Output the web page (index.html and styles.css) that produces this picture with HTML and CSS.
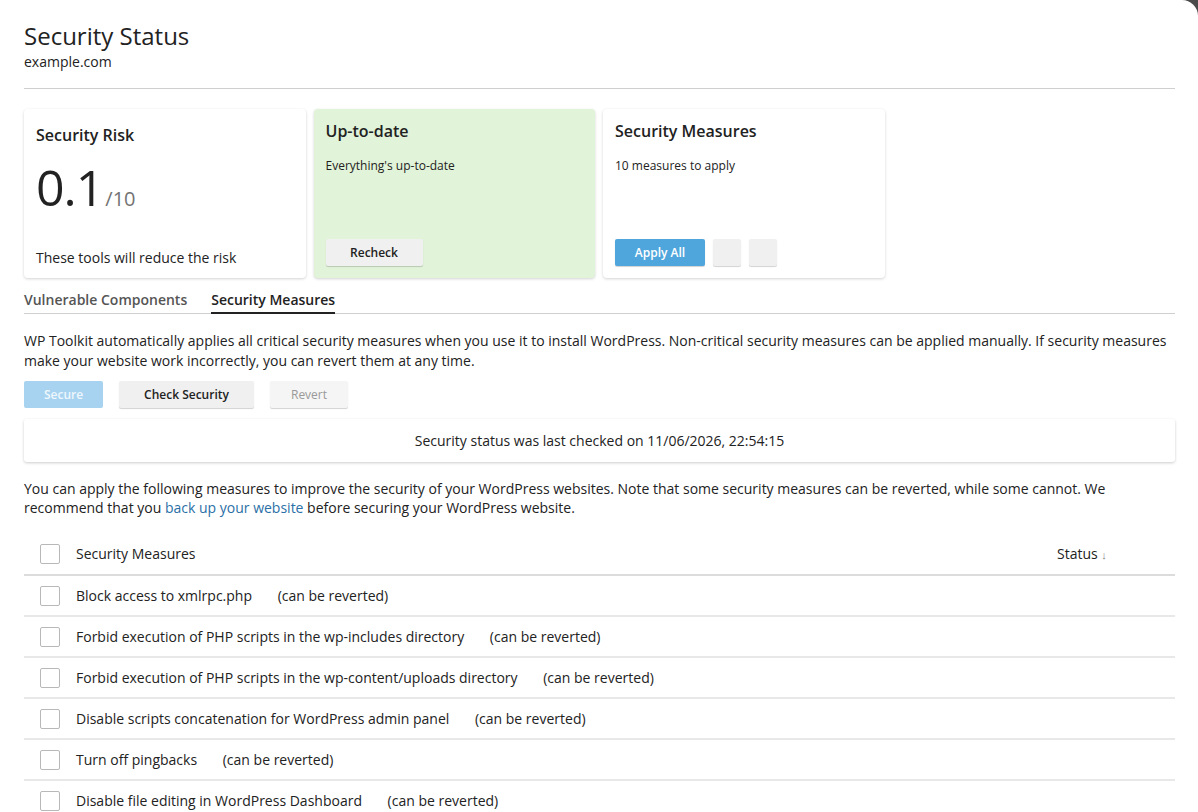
FILE: index.html
```html
<!DOCTYPE html>
<html lang="en">
<head>
    <meta charset="UTF-8">
    <meta name="viewport" content="width=device-width, initial-scale=1.0">
    <title>Security Status</title>
    <link rel="stylesheet" href="styles.css">
</head>
<body>
    <div class="panel">
        <h1 class="title">Security Status</h1>
        <div class="subtitle">example.com</div>
        <hr class="divider">

        <div class="cards">
            <div class="card card-risk">
                <div class="card-title">Security Risk</div>
                <div class="score"><span class="score-value">0.1</span><span class="score-max">/10</span></div>
                <div class="card-foot">These tools will reduce the risk</div>
            </div>
            <div class="card card-ok">
                <div class="card-title">Up-to-date</div>
                <div class="card-text">Everything's up-to-date</div>
                <div class="card-actions">
                    <button class="btn btn-wide">Recheck</button>
                </div>
            </div>
            <div class="card">
                <div class="card-title">Security Measures</div>
                <div class="card-text">10 measures to apply</div>
                <div class="card-actions">
                    <button class="btn btn-primary">Apply All</button>
                    <button class="btn btn-icon"></button>
                    <button class="btn btn-icon"></button>
                </div>
            </div>
        </div>

        <div class="tabs">
            <div class="tab">Vulnerable Components</div>
            <div class="tab active">Security Measures</div>
        </div>

        <p class="intro">WP Toolkit automatically applies all critical security measures when you use it to install WordPress. Non-critical security measures can be applied manually. If security measures make your website work incorrectly, you can revert them at any time.</p>

        <div class="toolbar">
            <button class="btn btn-secure">Secure</button>
            <button class="btn btn-check">Check Security</button>
            <button class="btn btn-disabled">Revert</button>
        </div>

        <div class="last-check">Security status was last checked on 11/06/2026, 22:54:15</div>

        <p class="note">You can apply the following measures to improve the security of your WordPress websites. Note that some security measures can be reverted, while some cannot. We recommend that you <a href="#" class="link">back up your website</a> before securing your WordPress website.</p>

        <table class="measures">
            <thead>
                <tr>
                    <th class="col-check"><span class="checkbox"></span></th>
                    <th>Security Measures</th>
                    <th class="col-status">Status <span class="sort">&darr;</span></th>
                </tr>
            </thead>
            <tbody id="rows"></tbody>
        </table>
    </div>

    <script>
        const measures = [
            "Block access to xmlrpc.php",
            "Forbid execution of PHP scripts in the wp-includes directory",
            "Forbid execution of PHP scripts in the wp-content/uploads directory",
            "Disable scripts concatenation for WordPress admin panel",
            "Turn off pingbacks",
            "Disable file editing in WordPress Dashboard",
            "Forbid execution of PHP scripts in the wp-content directory"
        ];

        const rows = document.getElementById('rows');
        measures.forEach(name => {
            const tr = document.createElement('tr');
            tr.innerHTML = '<td class="col-check"><span class="checkbox"></span></td>' +
                '<td>' + name + ' <span class="revert-note">(can be reverted)</span></td>' +
                '<td class="col-status"></td>';
            rows.appendChild(tr);
        });
    </script>
</body>
</html>
```

FILE: styles.css
```css
html, body {
    margin: 0;
    padding: 0;
    height: 100%;
    overflow: hidden;
    background-color: #4a4a4a;
    font-family: "Open Sans", Arial, sans-serif;
    color: #222;
}
.panel {
    background-color: #fff;
    min-height: 100%;
    border-top-right-radius: 16px;
    padding: 20px 23px 0 24px;
    box-sizing: border-box;
}
.title {
    margin: 0;
    font-size: 24px;
    line-height: 32px;
    font-weight: 400;
}
.subtitle {
    font-size: 14px;
    line-height: 20px;
}
.divider {
    margin: 16px 0 20px;
    border: 0;
    border-top: 1px solid #cfcfcf;
}
.cards {
    display: flex;
    gap: 8px;
}
.card {
    width: 281.5px;
    height: 169px;
    box-sizing: border-box;
    padding: 12px;
    border-radius: 4px;
    background-color: #fff;
    box-shadow: 0 1px 3px rgba(0, 0, 0, 0.18);
    display: flex;
    flex-direction: column;
}
.card-risk {
    padding-top: 16px;
}
.card-ok {
    background-color: #e1f3d8;
}
.card-title {
    font-size: 16px;
    line-height: 20px;
    font-weight: 600;
}
.card-text {
    margin-top: 17px;
    font-size: 12px;
    line-height: 16px;
}
.score {
    margin-top: 14px;
    display: flex;
    align-items: baseline;
}
.score-value {
    font-size: 50px;
    line-height: 56px;
    letter-spacing: -1px;
}
.score-max {
    margin-left: 2px;
    font-size: 20px;
    color: #737373;
}
.card-foot {
    margin-top: auto;
    margin-bottom: -2px;
    font-size: 14px;
    line-height: 20px;
}
.card-actions {
    margin-top: auto;
    display: flex;
    gap: 8px;
}
.btn {
    height: 27px;
    border: 0;
    border-radius: 2px;
    padding: 0 16px;
    font-family: inherit;
    font-size: 12px;
    font-weight: 600;
    color: #222;
    background-color: #f0f0f0;
    box-shadow: 0 1px 1px rgba(0, 0, 0, 0.18);
}
.btn-wide {
    width: 97px;
}
.btn-primary {
    width: 90px;
    background-color: #4fa6dc;
    color: #fff;
}
.btn-icon {
    width: 28px;
    padding: 0;
}
.tabs {
    margin-top: 12px;
    display: flex;
    gap: 24px;
    border-bottom: 1px solid #cfcfcf;
}
.tab {
    font-size: 14px;
    line-height: 20px;
    font-weight: 600;
    color: #555;
    padding-bottom: 2px;
    margin-bottom: -1px;
    border-bottom: 2px solid transparent;
}
.tab.active {
    color: #222;
    border-bottom-color: #222;
}
.intro, .note {
    margin: 17px 0 0;
    font-size: 14px;
    line-height: 20px;
}
.note {
    line-height: 19px;
}
.link {
    color: #2a6fa6;
    text-decoration: none;
}
.toolbar {
    margin-top: 10px;
    display: flex;
    gap: 16px;
}
.btn-secure {
    width: 79px;
    background-color: #a8d3f0;
    color: #eef7fd;
    box-shadow: none;
}
.btn-check {
    width: 135px;
}
.btn-disabled {
    width: 78px;
    background-color: #f5f5f5;
    color: #999;
    font-weight: 400;
}
.last-check {
    margin-top: 11px;
    height: 43px;
    line-height: 43px;
    text-align: center;
    font-size: 14px;
    border-radius: 3px;
    box-shadow: 0 1px 3px rgba(0, 0, 0, 0.2);
}
.measures {
    margin-top: 16px;
    width: 100%;
    border-collapse: collapse;
    font-size: 14px;
}
.measures th {
    height: 41px;
    text-align: left;
    font-weight: 400;
    border-bottom: 2px solid #dcdcdc;
    padding: 0;
}
.measures td {
    height: 39px;
    padding: 0;
    border-bottom: 2px solid #e8e8e8;
}
.measures .col-check {
    width: 36px;
    padding-left: 16px;
}
.measures .col-status {
    width: 118px;
}
.checkbox {
    display: block;
    width: 18px;
    height: 18px;
    border: 1px solid #b8b8b8;
    border-radius: 2px;
    background-color: #fff;
}
.sort {
    font-size: 11px;
    color: #888;
}
.revert-note {
    margin-left: 22px;
}
```
